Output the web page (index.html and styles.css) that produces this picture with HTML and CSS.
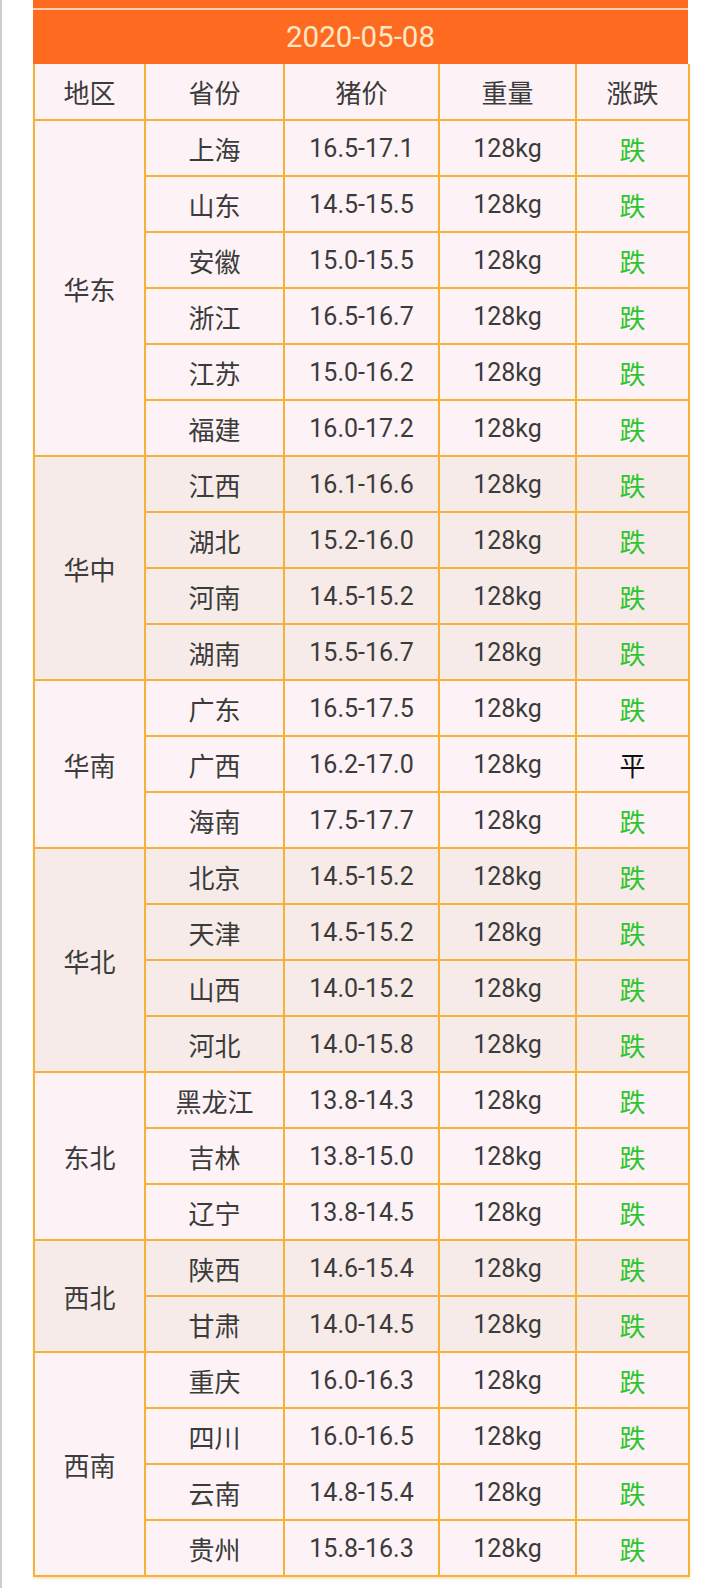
FILE: index.html
```html
<!DOCTYPE html>
<html lang="zh">
<head>
<meta charset="utf-8">
<title>猪价</title>
<link rel="stylesheet" href="styles.css">
</head>
<body>
<div class="page">
  <div class="sheet">
    <div class="prev"></div>
    <div class="date">2020-05-08</div>
    <table class="prices">
      <colgroup>
        <col class="c1"><col class="c2"><col class="c3"><col class="c4"><col class="c5">
      </colgroup>
      <thead>
        <tr class="head"><th>地区</th><th>省份</th><th>猪价</th><th>重量</th><th>涨跌</th></tr>
      </thead>
      <tbody class="g-light">
        <tr><td rowspan="6">华东</td><td>上海</td><td class="num">16.5-17.1</td><td class="num">128kg</td><td class="down">跌</td></tr>
        <tr><td>山东</td><td class="num">14.5-15.5</td><td class="num">128kg</td><td class="down">跌</td></tr>
        <tr><td>安徽</td><td class="num">15.0-15.5</td><td class="num">128kg</td><td class="down">跌</td></tr>
        <tr><td>浙江</td><td class="num">16.5-16.7</td><td class="num">128kg</td><td class="down">跌</td></tr>
        <tr><td>江苏</td><td class="num">15.0-16.2</td><td class="num">128kg</td><td class="down">跌</td></tr>
        <tr><td>福建</td><td class="num">16.0-17.2</td><td class="num">128kg</td><td class="down">跌</td></tr>
      </tbody>
      <tbody class="g-dark">
        <tr><td rowspan="4">华中</td><td>江西</td><td class="num">16.1-16.6</td><td class="num">128kg</td><td class="down">跌</td></tr>
        <tr><td>湖北</td><td class="num">15.2-16.0</td><td class="num">128kg</td><td class="down">跌</td></tr>
        <tr><td>河南</td><td class="num">14.5-15.2</td><td class="num">128kg</td><td class="down">跌</td></tr>
        <tr><td>湖南</td><td class="num">15.5-16.7</td><td class="num">128kg</td><td class="down">跌</td></tr>
      </tbody>
      <tbody class="g-light">
        <tr><td rowspan="3">华南</td><td>广东</td><td class="num">16.5-17.5</td><td class="num">128kg</td><td class="down">跌</td></tr>
        <tr><td>广西</td><td class="num">16.2-17.0</td><td class="num">128kg</td><td class="flat">平</td></tr>
        <tr><td>海南</td><td class="num">17.5-17.7</td><td class="num">128kg</td><td class="down">跌</td></tr>
      </tbody>
      <tbody class="g-dark">
        <tr><td rowspan="4">华北</td><td>北京</td><td class="num">14.5-15.2</td><td class="num">128kg</td><td class="down">跌</td></tr>
        <tr><td>天津</td><td class="num">14.5-15.2</td><td class="num">128kg</td><td class="down">跌</td></tr>
        <tr><td>山西</td><td class="num">14.0-15.2</td><td class="num">128kg</td><td class="down">跌</td></tr>
        <tr><td>河北</td><td class="num">14.0-15.8</td><td class="num">128kg</td><td class="down">跌</td></tr>
      </tbody>
      <tbody class="g-light">
        <tr><td rowspan="3">东北</td><td>黑龙江</td><td class="num">13.8-14.3</td><td class="num">128kg</td><td class="down">跌</td></tr>
        <tr><td>吉林</td><td class="num">13.8-15.0</td><td class="num">128kg</td><td class="down">跌</td></tr>
        <tr><td>辽宁</td><td class="num">13.8-14.5</td><td class="num">128kg</td><td class="down">跌</td></tr>
      </tbody>
      <tbody class="g-dark">
        <tr><td rowspan="2">西北</td><td>陕西</td><td class="num">14.6-15.4</td><td class="num">128kg</td><td class="down">跌</td></tr>
        <tr><td>甘肃</td><td class="num">14.0-14.5</td><td class="num">128kg</td><td class="down">跌</td></tr>
      </tbody>
      <tbody class="g-light">
        <tr><td rowspan="4">西南</td><td>重庆</td><td class="num">16.0-16.3</td><td class="num">128kg</td><td class="down">跌</td></tr>
        <tr><td>四川</td><td class="num">16.0-16.5</td><td class="num">128kg</td><td class="down">跌</td></tr>
        <tr><td>云南</td><td class="num">14.8-15.4</td><td class="num">128kg</td><td class="down">跌</td></tr>
        <tr><td>贵州</td><td class="num">15.8-16.3</td><td class="num">128kg</td><td class="down">跌</td></tr>
      </tbody>
    </table>
  </div>
</div>
</body>
</html>
```

FILE: styles.css
```css
html, body {
  margin: 0;
  padding: 0;
  background: #ffffff;
}

.page {
  min-height: 1588px;
  border-left: 2px solid #cdcdcd;
  box-sizing: border-box;
  padding-left: 31px;
  font-family: Roboto, "Noto Sans CJK SC", sans-serif;
  color: #3b3b3b;
}

.sheet {
  width: 655px;
}

.prev {
  height: 8px;
  background: #fd6a20;
  border-bottom: 2px solid #fbd3ab;
}

.date {
  height: 54px;
  background: #fd6a20;
  color: #fde6c6;
  font-size: 29.5px;
  display: flex;
  align-items: center;
  justify-content: center;
}

.prices {
  width: 655px;
  border-collapse: collapse;
  table-layout: fixed;
  border: 2px solid #f4b23b;
  border-top: none;
  box-shadow: 0 2px 2px rgba(240, 180, 80, 0.35);
}

.c1 { width: 111px; }
.c2 { width: 139px; }
.c3 { width: 155px; }
.c4 { width: 137px; }
.c5 { width: 113px; }

.prices th,
.prices td {
  border: 2px solid #f4b23b;
  text-align: center;
  vertical-align: middle;
  padding: 0;
  height: 54px;
  font-size: 26px;
  font-weight: normal;
  font-family: "Noto Sans CJK SC", sans-serif;
}

.prices .head th {
  height: 55px;
  border-top: none;
  background: #fdf3f6;
}

.prices td.num {
  font-family: Roboto, "Noto Sans CJK SC", sans-serif;
  font-size: 25px;
}

.g-light td { background: #fdf3f6; }
.g-dark td { background: #f7ebe9; }

.prices td.down { color: #2ec52e; }
.prices td.flat { color: #111111; }
```
